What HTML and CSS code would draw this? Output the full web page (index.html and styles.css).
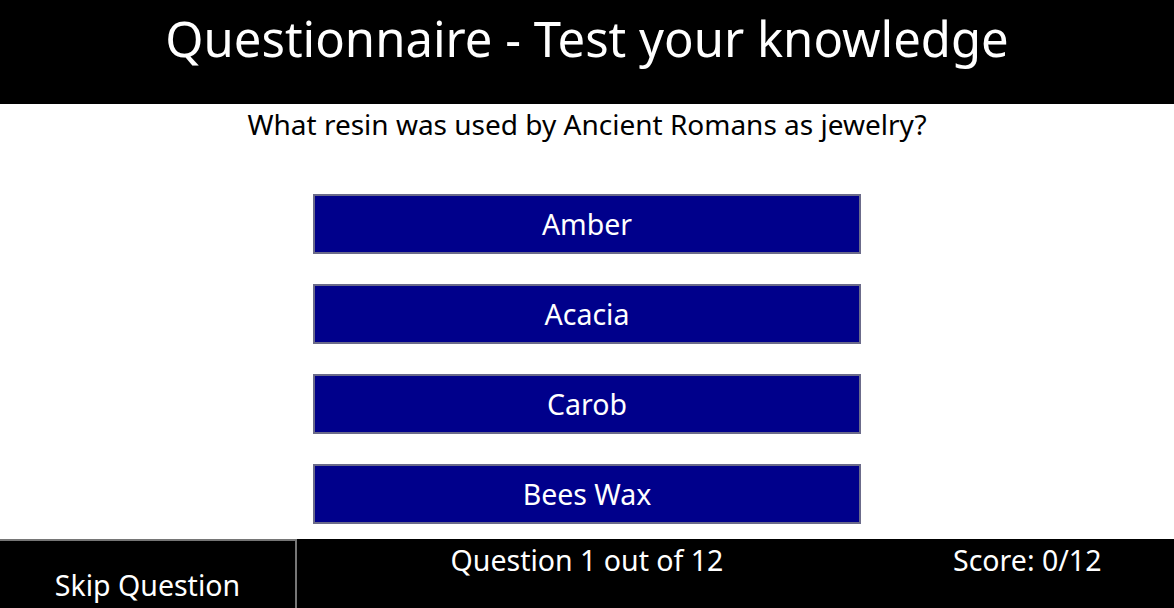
FILE: index.html
```html
<!DOCTYPE html>
<html lang="en">
<head>
<meta charset="utf-8">
<title>Questionnaire</title>
<link rel="stylesheet" href="styles.css">
</head>
<body>
<div class="page">
  <header class="header">
    <h1 class="title">Questionnaire - Test your knowledge</h1>
  </header>
  <main class="main">
    <p class="question">What resin was used by Ancient Romans as jewelry?</p>
    <div class="answers">
      <button class="answer">Amber</button>
      <button class="answer">Acacia</button>
      <button class="answer">Carob</button>
      <button class="answer">Bees Wax</button>
    </div>
  </main>
  <footer class="footer">
    <button class="skip">Skip Question</button>
    <div class="progress">Question 1 out of 12</div>
    <div class="score">Score: 0/12</div>
  </footer>
</div>
</body>
</html>
```

FILE: styles.css
```css
html, body {
  margin: 0;
  padding: 0;
  height: 100%;
  overflow: hidden;
}
body {
  font-family: "Noto Sans", "Open Sans", sans-serif;
  background: #fff;
  color: #000;
}
.page {
  display: flex;
  flex-direction: column;
  height: 100vh;
}
.header {
  background: #000;
  height: 104px;
  flex: none;
}
.title {
  margin: 0;
  color: #fff;
  font-weight: 400;
  font-size: 49px;
  line-height: 76px;
  text-align: center;
}
.main {
  flex: 1;
  display: flex;
  flex-direction: column;
  align-items: center;
}
.question {
  margin: 0;
  font-size: 28px;
  line-height: 40px;
  text-align: center;
}
.answers {
  margin-top: 50px;
  display: flex;
  flex-direction: column;
  gap: 30px;
}
.answer {
  width: 548px;
  height: 60px;
  background: #00008b;
  color: #fff;
  border: 2px solid #6b6b8a;
  font-family: inherit;
  font-size: 28.5px;
  padding: 0;
  cursor: pointer;
}
.footer {
  flex: none;
  height: 69px;
  background: #000;
  color: #fff;
  display: grid;
  grid-template-columns: 25% 50% 25%;
  align-items: start;
}
.skip {
  height: 90px;
  background: #000;
  color: #fff;
  border: 0;
  border-top: 2px solid #767676;
  border-right: 2px solid #767676;
  font-family: inherit;
  font-size: 28.5px;
  padding: 0;
  width: 297px;
}
.progress, .score {
  text-align: center;
  font-size: 28.5px;
  line-height: 40px;
  padding-top: 1px;
}
```
